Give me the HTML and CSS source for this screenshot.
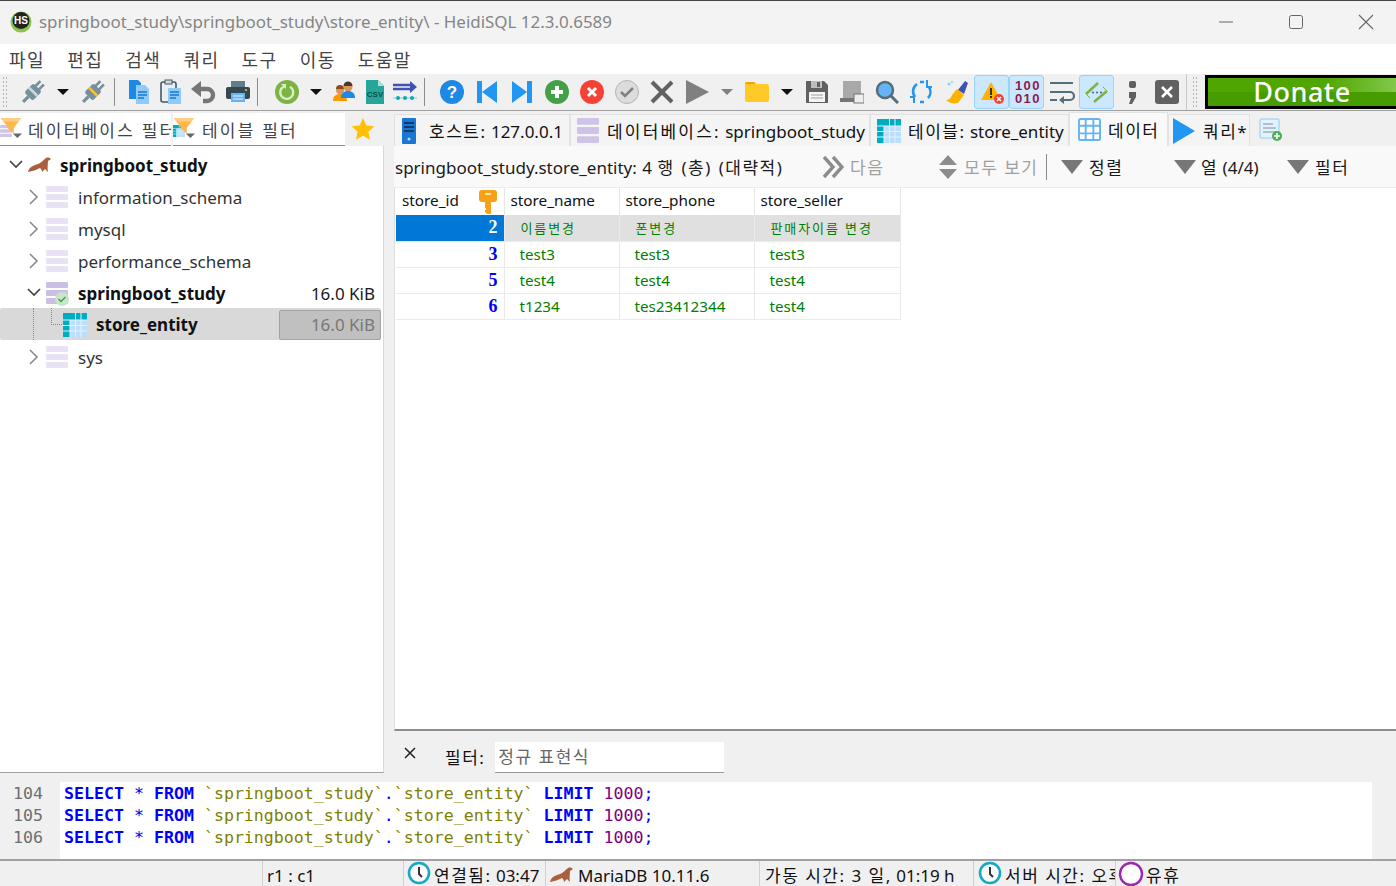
FILE: index.html
```html
<!DOCTYPE html>
<html lang="ko">
<head>
    <meta charset="UTF-8">
    <title>HeidiSQL</title>
    <link rel="stylesheet" href="styles.css">
</head>
<body>
    <svg class="defs" width="0" height="0">
        <symbol id="db" viewBox="0 0 22 22"><rect x="0" y="0" width="22" height="6" rx="1" fill="currentColor"/><rect x="0" y="8" width="22" height="6" rx="1" fill="currentColor"/><rect x="0" y="16" width="22" height="6" rx="1" fill="currentColor"/></symbol>
        <symbol id="chev-r" viewBox="0 0 12 16"><path d="M2 1l7 7-7 7" fill="none" stroke="#8a8a8a" stroke-width="1.6"/></symbol>
        <symbol id="chev-d" viewBox="0 0 16 12"><path d="M2 2l6 6 6-6" fill="none" stroke="#404040" stroke-width="1.6"/></symbol>
        <symbol id="seal" viewBox="0 0 26 18"><path d="M1 16c1-5 6-7 10-8 3-1 5-4 8-6 2-1 4 0 5 1l-3 2c0 3-1 7 0 11l-3-3-3 3c0-2-1-3-2-4-3 2-8 3-12 4z" fill="#a9603f"/></symbol>
        <symbol id="tri" viewBox="0 0 24 16"><path d="M1 1h22L12 15z" fill="#777"/></symbol>
        <symbol id="clock" viewBox="0 0 24 24"><circle cx="12" cy="12" r="10" fill="#fff" stroke="#17a9c4" stroke-width="2.6"/><path d="M12 6v7l3 3" fill="none" stroke="#333" stroke-width="2"/></symbol>
        <symbol id="grid" viewBox="0 0 24 24"><rect x="1" y="1" width="22" height="22" rx="2" fill="#fff" stroke="#64b5f6" stroke-width="2"/><path d="M8 1v22M16 1v22M1 8h22M1 16h22" stroke="#64b5f6" stroke-width="2"/></symbol>
        <symbol id="tealgrid" viewBox="0 0 24 24"><rect width="24" height="24" fill="#bbdefb"/><rect width="24" height="7" fill="#00acc1"/><rect width="7" height="24" fill="#00acc1"/><path d="M7 7v17M12.500 0v24M18 0v24M0 12.500h24M0 18h24M0 7h24" stroke="#e3f2fd" stroke-width="1"/></symbol>
        <symbol id="funnel" viewBox="0 0 24 24"><path d="M1 1h22l-8 11v6l-6-5v-1z" fill="#ffb74d"/><path d="M1 1h22l-3 4H4z" fill="#ffcc80"/><path d="M14 18h10l-5 5z" fill="#666"/></symbol>
    </svg>

    <header class="titlebar">
        <svg class="app-logo" width="22" height="22" viewBox="0 0 22 22"><circle cx="11" cy="11" r="10.500" fill="#8bc34a"/><circle cx="11" cy="9.500" r="8.500" fill="#222"/><text x="11" y="13" class="app-logo-text">HS</text></svg>
        <span class="title-text">springboot_study\springboot_study\store_entity\ - HeidiSQL 12.3.0.6589</span>
        <div class="win-controls">
            <svg width="16" height="16" viewBox="0 0 16 16"><path d="M1 8h14" stroke="#666" stroke-width="1"/></svg>
            <svg width="16" height="16" viewBox="0 0 16 16"><rect x="1.500" y="1.500" width="13" height="13" rx="2" fill="none" stroke="#666"/></svg>
            <svg width="16" height="16" viewBox="0 0 16 16"><path d="M1 1l14 14M15 1L1 15" stroke="#666" stroke-width="1.100"/></svg>
        </div>
    </header>

    <nav class="menubar">
        <span>파일</span><span>편집</span><span>검색</span><span>쿼리</span><span>도구</span><span>이동</span><span>도움말</span>
    </nav>

    <div class="toolbar-row">
        <div class="toolbar">
            <span class="grip"></span>
            <button class="tb"><svg width="28" height="28" viewBox="0 0 26 26"><g transform="rotate(45 13 13)"><rect x="9.500" y="1" width="2.500" height="7" fill="#78909c"/><rect x="14" y="1" width="2.500" height="7" fill="#78909c"/><rect x="7.500" y="7" width="11" height="12" rx="2" fill="#78909c"/><rect x="7.500" y="11.500" width="11" height="2.500" fill="#cfd8dc"/><rect x="11.500" y="19" width="3" height="7" fill="#78909c"/></g></svg></button>
            <button class="tb-drop"><span class="caret"></span></button>
            <button class="tb"><svg width="28" height="28" viewBox="0 0 26 26"><g transform="rotate(45 13 13)"><rect x="9.500" y="1" width="2.500" height="7" fill="#78909c"/><rect x="14" y="1" width="2.500" height="7" fill="#78909c"/><rect x="7.500" y="7" width="11" height="12" rx="2" fill="#78909c"/><rect x="7.500" y="11.500" width="11" height="2.500" fill="#fbc02d"/><rect x="11.500" y="19" width="3" height="7" fill="#78909c"/></g></svg></button>
            <span class="tb-sep"></span>
            <button class="tb w32"><svg width="24" height="26" viewBox="0 0 24 26"><path d="M2 1h9l3 3v16H2z" fill="#1e88e5"/><path d="M9 6h9l4 4v15H9z" fill="#90caf9"/><path d="M11 13h9M11 16h9M11 19h6" stroke="#1976d2" stroke-width="1.300"/></svg></button>
            <button class="tb w31"><svg width="24" height="26" viewBox="0 0 24 26"><rect x="2" y="3" width="15" height="20" rx="2" fill="#eceff1" stroke="#455a64" stroke-width="1.600"/><rect x="6" y="1" width="7" height="4" fill="#cfd8dc" stroke="#455a64"/><rect x="9" y="9" width="13" height="16" fill="#90caf9"/><path d="M11 13h9M11 16h9M11 19h6" stroke="#1976d2" stroke-width="1.300"/></svg></button>
            <button class="tb w34"><svg width="26" height="24" viewBox="0 0 26 24"><path d="M9 9h8a5.500 5.500 0 0 1 0 12h-4" fill="none" stroke="#757575" stroke-width="4.400"/><path d="M11 1L1 9l10 8z" fill="#757575"/></svg></button>
            <button class="tb"><svg width="26" height="24" viewBox="0 0 26 24"><rect x="6" y="1" width="14" height="6" fill="#607d8b"/><rect x="1" y="7" width="24" height="12" rx="2" fill="#37474f"/><rect x="6" y="13" width="14" height="9" fill="#64b5f6"/><path d="M8 16h10M8 19h10" stroke="#e3f2fd"/><rect x="20" y="9" width="2" height="2" fill="#8bc34a"/></svg></button>
            <span class="tb-sep sep-wide"></span>
            <button class="tb"><svg width="24" height="24" viewBox="0 0 24 24"><circle cx="12" cy="12" r="12" fill="#7cb342"/><path d="M9 6.500a6.500 6.500 0 1 0 6 .300" fill="none" stroke="#dcedc8" stroke-width="2.400"/><path d="M6 4h5v5z" fill="#dcedc8"/></svg></button>
            <button class="tb-drop w24"><span class="caret"></span></button>
            <button class="tb w32"><svg width="24" height="22" viewBox="0 0 24 22"><circle cx="8" cy="9" r="4" fill="#d9955b"/><path d="M4 8a4 4 0 0 1 8 0z" fill="#8d4a1b"/><path d="M1 20c0-5 3-7 7-7s7 2 7 7z" fill="#ff9800"/><circle cx="16" cy="6" r="4.500" fill="#d9955b"/><path d="M11.500 5a4.500 4.500 0 0 1 9 0z" fill="#4e342e"/><path d="M9 17c0-5 3-7 7-7s7 2 7 7z" fill="#1e88e5"/></svg></button>
            <button class="tb w30"><svg width="20" height="24" viewBox="0 0 20 24"><path d="M1 0h12l6 6v18H1z" fill="#26a69a"/><path d="M13 0l6 6h-6z" fill="#b2dfdb"/><text x="10" y="17" class="csv-text">CSV</text></svg></button>
            <button class="tb w30"><svg width="26" height="26" viewBox="0 0 26 26"><path d="M1 6h18M1 10h18" stroke="#3f51b5" stroke-width="2.500"/><path d="M18 2l7 6-7 6z" fill="#3f51b5"/><path d="M1 19h24" stroke="#b0bec5"/><circle cx="6" cy="19" r="2" fill="#00acc1"/><circle cx="13" cy="19" r="2" fill="#00acc1"/><circle cx="20" cy="19" r="2" fill="#00acc1"/></svg></button>
            <span class="tb-sep sep-wide2"></span>
            <button class="tb"><svg width="24" height="24" viewBox="0 0 24 24"><circle cx="12" cy="12" r="12" fill="#1e88e5"/><text x="12" y="18" class="help-text">?</text></svg></button>
            <button class="tb"><svg width="22" height="22" viewBox="0 0 22 22"><rect x="1" y="0" width="5" height="22" fill="#2196f3"/><path d="M21 0v22L6 11z" fill="#2196f3"/></svg></button>
            <button class="tb"><svg width="22" height="22" viewBox="0 0 22 22"><rect x="16" y="0" width="5" height="22" fill="#2196f3"/><path d="M1 0v22l15-11z" fill="#2196f3"/></svg></button>
            <button class="tb"><svg width="24" height="24" viewBox="0 0 24 24"><circle cx="12" cy="12" r="12" fill="#43a047"/><path d="M12 6v12M6 12h12" stroke="#fff" stroke-width="4"/></svg></button>
            <button class="tb"><svg width="24" height="24" viewBox="0 0 24 24"><circle cx="12" cy="12" r="12" fill="#f44336"/><path d="M8 8l8 8M16 8l-8 8" stroke="#fff" stroke-width="3"/></svg></button>
            <button class="tb"><svg width="24" height="24" viewBox="0 0 24 24"><circle cx="12" cy="12" r="11.500" fill="#dcdcdc" stroke="#b5b5b5"/><path d="M6 12l4 4 8-8" fill="none" stroke="#808080" stroke-width="2.500"/></svg></button>
            <button class="tb"><svg width="24" height="24" viewBox="0 0 24 24"><path d="M2 2l20 20M22 2L2 22" stroke="#616161" stroke-width="4"/></svg></button>
            <button class="tb"><svg width="24" height="24" viewBox="0 0 24 24"><path d="M1 0l23 12L1 24z" fill="#808080"/></svg></button>
            <button class="tb-drop"><span class="caret caret-gray"></span></button>
            <button class="tb"><svg width="24" height="20" viewBox="0 0 24 20"><path d="M0 2a2 2 0 0 1 2-2h7l2 2h11a2 2 0 0 1 2 2v14a2 2 0 0 1-2 2H2a2 2 0 0 1-2-2z" fill="#ffca28"/><path d="M0 2a2 2 0 0 1 2-2h7l2 2H0z" fill="#ffa000"/></svg></button>
            <button class="tb-drop"><span class="caret"></span></button>
            <button class="tb"><svg width="24" height="24" viewBox="0 0 24 24"><path d="M1 1h18l4 4v18H1z" fill="#616161"/><rect x="6" y="1" width="11" height="7" fill="#bdbdbd"/><rect x="12" y="2" width="3" height="5" fill="#616161"/><rect x="4" y="12" width="16" height="10" fill="#f5f5f5"/><path d="M6 15h12M6 18h12" stroke="#9e9e9e"/></svg></button>
            <button class="tb"><svg width="24" height="24" viewBox="0 0 24 24"><rect x="3" y="1" width="18" height="17" fill="#a9a9a9"/><path d="M0 18h16v4H0z" fill="#757575"/><rect x="14" y="14" width="10" height="9" fill="#eee" stroke="#757575"/></svg></button>
            <button class="tb"><svg width="24" height="24" viewBox="0 0 24 24"><circle cx="10" cy="10" r="8" fill="#64b5f6" stroke="#546e7a" stroke-width="2.500"/><path d="M16 16l7 7" stroke="#546e7a" stroke-width="3"/></svg></button>
            <button class="tb"><svg width="24" height="24" viewBox="0 0 24 24"><path d="M5 17a9 9 0 0 1 2-13M10 2h4M19 7a9 9 0 0 1-1 11M10 22h4" fill="none" stroke="#2196f3" stroke-width="2.600"/><path d="M17 0v7h5M4 23v-6h-4" fill="none" stroke="#2196f3" stroke-width="2"/></svg></button>
            <button class="tb"><svg width="24" height="24" viewBox="0 0 24 24"><path d="M13 10L20 1l3 2-4 11z" fill="#3f51b5"/><path d="M12 9l7 6-6 8c-4 1-9 0-12-3 3 0 5-2 6-5z" fill="#ffb300"/><circle cx="4" cy="4" r="1.500" fill="#81d4fa"/><circle cx="7" cy="2" r="1" fill="#81d4fa"/></svg></button>
            <button class="tb on"><svg width="24" height="24" viewBox="0 0 24 24"><path d="M11 2L1 20h20z" fill="#ffb300"/><rect x="10" y="8" width="2" height="7" fill="#333"/><rect x="10" y="16" width="2" height="2" fill="#333"/><circle cx="19" cy="19" r="5" fill="#f44336"/><path d="M17 17l4 4M21 17l-4 4" stroke="#fff" stroke-width="1.500"/></svg></button>
            <button class="tb on"><span class="bits">100<br>010</span></button>
            <button class="tb"><svg width="26" height="24" viewBox="0 0 26 24"><path d="M1 3h23M1 12h20a3.500 3.500 0 0 1 0 8h-7M1 20h7" fill="none" stroke="#546e7a" stroke-width="2.200"/><path d="M15 16v8l-5-4z" fill="#546e7a"/></svg></button>
            <button class="tb on"><svg width="26" height="24" viewBox="0 0 26 24"><path d="M2 14L14 3M10 22L23 11" stroke="#7cb342" stroke-width="2.600"/><path d="M2 14l4 4M23 11l-4-4" stroke="#7cb342" stroke-width="1"/><circle cx="9" cy="12.500" r="1.100" fill="#546e7a"/><circle cx="13" cy="12.500" r="1.100" fill="#546e7a"/><circle cx="17" cy="12.500" r="1.100" fill="#546e7a"/></svg></button>
            <button class="tb"><svg width="10" height="24" viewBox="0 0 10 24"><rect x="2" y="1" width="7" height="7" rx="2" fill="#616161"/><path d="M2 12h7v5l-4 7H2l2-6H2z" fill="#616161"/></svg></button>
            <button class="tb"><svg width="24" height="24" viewBox="0 0 24 24"><rect width="24" height="24" rx="3" fill="#616161"/><path d="M7 7l10 10M17 7L7 17" stroke="#fff" stroke-width="2.600"/></svg></button>
        </div>
        <div class="donate-bar">
            <span class="grip"></span>
            <div class="donate">Donate</div>
        </div>
    </div>

    <div class="main">
        <aside class="left-pane">
            <div class="filter-row">
                <div class="filter-box first">
                    <svg class="filter-db" width="12" height="14"><use href="#db" color="#d1c4e9"/></svg>
                    <svg class="filter-icon" width="22" height="24"><use href="#funnel"/></svg>
                    <span class="ko">데이터베이스 필터</span>
                </div>
                <div class="filter-box second">
                    <svg class="filter-db" width="12" height="14"><use href="#tealgrid"/></svg>
                    <svg class="filter-icon" width="22" height="24"><use href="#funnel"/></svg>
                    <span class="ko">테이블 필터</span>
                </div>
                <svg class="star" width="24" height="24" viewBox="0 0 24 24"><path d="M12 1l3.400 7.400 8 .9-6 5.400 1.700 8L12 18.700 4.900 22.700l1.700-8-6-5.400 8-.9z" fill="#ffc107"/></svg>
            </div>
            <ul class="tree">
                <li class="tree-row root">
                    <svg class="chev" width="16" height="12"><use href="#chev-d"/></svg>
                    <svg class="seal" width="26" height="18"><use href="#seal"/></svg>
                    <b>springboot_study</b>
                </li>
                <li class="tree-row db">
                    <svg class="chev" width="12" height="16"><use href="#chev-r"/></svg>
                    <svg class="db-icon" width="22" height="22"><use href="#db" color="#e8e2f4"/></svg>
                    <span>information_schema</span>
                </li>
                <li class="tree-row db">
                    <svg class="chev" width="12" height="16"><use href="#chev-r"/></svg>
                    <svg class="db-icon" width="22" height="22"><use href="#db" color="#e8e2f4"/></svg>
                    <span>mysql</span>
                </li>
                <li class="tree-row db">
                    <svg class="chev" width="12" height="16"><use href="#chev-r"/></svg>
                    <svg class="db-icon" width="22" height="22"><use href="#db" color="#e8e2f4"/></svg>
                    <span>performance_schema</span>
                </li>
                <li class="tree-row db">
                    <svg class="chev-open" width="16" height="12"><use href="#chev-d"/></svg>
                    <span class="db-active">
                        <svg class="db-icon" width="22" height="22"><use href="#db" color="#cbbfe6"/></svg>
                        <svg class="db-check" width="14" height="14" viewBox="0 0 14 14"><circle cx="7" cy="7" r="7" fill="#c8e6c9"/><path d="M3.500 7l2.500 2.500 4.500-4.500" fill="none" stroke="#43a047" stroke-width="1.400"/></svg>
                    </span>
                    <b>springboot_study</b>
                    <span class="size">16.0 KiB</span>
                </li>
                <li class="tree-row table selected">
                    <span class="guide"></span>
                    <svg class="table-icon" width="24" height="24"><use href="#tealgrid"/></svg>
                    <b>store_entity</b>
                    <span class="size-box">16.0 KiB</span>
                </li>
                <li class="tree-row db">
                    <svg class="chev" width="12" height="16"><use href="#chev-r"/></svg>
                    <svg class="db-icon" width="22" height="22"><use href="#db" color="#e8e2f4"/></svg>
                    <span>sys</span>
                </li>
            </ul>
        </aside>

        <section class="right-pane">
            <div class="tabs">
                <div class="tab tab-host">
                    <svg width="14" height="26" viewBox="0 0 14 26"><rect width="14" height="26" rx="1" fill="#1976d2"/><path d="M2 5h10M2 9h10M2 13h10" stroke="#0d2a4a" stroke-width="1.500"/><circle cx="7" cy="21" r="1.500" fill="#bbdefb"/></svg>
                    <span><span class="ko">호스트:</span> 127.0.0.1</span>
                </div>
                <div class="tab tab-db">
                    <svg width="22" height="25" viewBox="0 0 22 22" preserveAspectRatio="none"><use href="#db" color="#cfc3e8"/></svg>
                    <span><span class="ko">데이터베이스:</span> springboot_study</span>
                </div>
                <div class="tab tab-table">
                    <svg width="24" height="24"><use href="#tealgrid"/></svg>
                    <span><span class="ko">테이블:</span> store_entity</span>
                </div>
                <div class="tab tab-data active">
                    <svg width="23" height="23"><use href="#grid"/></svg>
                    <span class="ko">데이터</span>
                </div>
                <div class="tab tab-query">
                    <svg width="22" height="26" viewBox="0 0 22 26"><path d="M0 0l22 13L0 26z" fill="#2196f3"/></svg>
                    <span><span class="ko">쿼리</span>*</span>
                </div>
                <div class="tab-add">
                    <svg width="24" height="24" viewBox="0 0 24 24"><rect x="1" y="1" width="19" height="19" rx="1" fill="#e3f2fd" stroke="#90caf9"/><path d="M4 6h10M4 10h13M4 14h13" stroke="#78909c"/><circle cx="18" cy="18" r="5" fill="#4caf50"/><path d="M18 15v6M15 18h6" stroke="#fff" stroke-width="1.600"/></svg>
                </div>
            </div>

            <div class="data-head">
                <span class="data-title">springboot_study.store_entity: 4 <span class="ko">행 (총) (대략적)</span></span>
                <span class="head-item next">
                    <svg width="22" height="24" viewBox="0 0 22 24"><path d="M2 2l9 10-9 10M11 2l9 10-9 10" fill="none" stroke="#8c8c8c" stroke-width="3.400"/></svg>
                    <span class="muted ko">다음</span>
                </span>
                <span class="head-item showall">
                    <svg width="20" height="24" viewBox="0 0 20 24"><path d="M10 0l9 10H1zM10 24l9-10H1z" fill="#8c8c8c"/></svg>
                    <span class="muted ko">모두 보기</span>
                </span>
                <span class="head-item sort">
                    <svg width="24" height="16"><use href="#tri"/></svg>
                    <span class="ko">정렬</span>
                </span>
                <span class="head-item cols">
                    <svg width="24" height="16"><use href="#tri"/></svg>
                    <span><span class="ko">열</span> (4/4)</span>
                </span>
                <span class="head-item filt">
                    <svg width="24" height="16"><use href="#tri"/></svg>
                    <span class="ko">필터</span>
                </span>
            </div>

            <div class="grid-area">
                <table class="data-grid">
                    <colgroup><col class="c1"><col class="c2"><col class="c3"><col class="c4"></colgroup>
                    <thead>
                        <tr>
                            <th class="th-first"><span class="th-id">store_id<svg width="18" height="24" viewBox="0 0 18 24"><path d="M3 0h12a3 3 0 0 1 3 3v6a3 3 0 0 1-3 3h-3v12H8l-2-2v-2h1v-2H6v-6H3a3 3 0 0 1-3-3V3a3 3 0 0 1 3-3z" fill="#f6a118"/><rect x="6" y="3" width="6" height="2" fill="#ffe0a3"/></svg></span></th>
                            <th>store_name</th>
                            <th>store_phone</th>
                            <th>store_seller</th>
                        </tr>
                    </thead>
                    <tbody>
                        <tr class="sel">
                            <td class="id focus">2</td>
                            <td class="small">이름변경</td>
                            <td class="small">폰변경</td>
                            <td class="small">판매자이름 변경</td>
                        </tr>
                        <tr><td class="id">3</td><td>test3</td><td>test3</td><td>test3</td></tr>
                        <tr><td class="id">5</td><td>test4</td><td>test4</td><td>test4</td></tr>
                        <tr><td class="id">6</td><td>t1234</td><td>tes23412344</td><td>test4</td></tr>
                    </tbody>
                </table>
            </div>

            <div class="filter-panel">
                <svg class="filter-x" width="12" height="12" viewBox="0 0 12 12"><path d="M1 1l10 10M11 1L1 11" stroke="#222" stroke-width="1.500"/></svg>
                <span class="filter-label ko">필터:</span>
                <span class="filter-input ko">정규 표현식</span>
            </div>
        </section>
    </div>

    <div class="log">
        <div class="gutter">
            <div class="log-line">104</div>
            <div class="log-line">105</div>
            <div class="log-line">106</div>
        </div>
        <div class="sql">
            <div class="log-line"><span class="kw">SELECT</span> * <span class="kw">FROM</span> <span class="name">&#96;springboot_study&#96;</span>.<span class="name">&#96;store_entity&#96;</span> <span class="kw">LIMIT</span> <span class="num">1000</span>;</div>
            <div class="log-line"><span class="kw">SELECT</span> * <span class="kw">FROM</span> <span class="name">&#96;springboot_study&#96;</span>.<span class="name">&#96;store_entity&#96;</span> <span class="kw">LIMIT</span> <span class="num">1000</span>;</div>
            <div class="log-line"><span class="kw">SELECT</span> * <span class="kw">FROM</span> <span class="name">&#96;springboot_study&#96;</span>.<span class="name">&#96;store_entity&#96;</span> <span class="kw">LIMIT</span> <span class="num">1000</span>;</div>
        </div>
        <div class="log-scroll"></div>
    </div>

    <footer class="statusbar">
        <div class="st st-blank"></div>
        <div class="st st-pos">r1 : c1</div>
        <div class="st st-conn"><svg width="24" height="24"><use href="#clock"/></svg><span><span class="ko">연결됨:</span> 03:47</span></div>
        <div class="st st-ver"><svg width="26" height="18"><use href="#seal"/></svg><span>MariaDB 10.11.6</span></div>
        <div class="st st-up"><span><span class="ko">가동 시간: 3 일,</span> 01:19 h</span></div>
        <div class="st st-time"><svg width="24" height="24"><use href="#clock"/></svg><span class="ko">서버 시간: 오후</span></div>
        <div class="st st-idle"><svg width="26" height="26" viewBox="0 0 26 26"><circle cx="13" cy="13" r="11" fill="#fff" stroke="#9c27b0" stroke-width="2.400"/></svg><span class="ko">유휴</span></div>
    </footer>
</body>
</html>
```

FILE: styles.css
```css
* {
    box-sizing: border-box;
}

html, body {
    margin: 0;
    height: 100%;
}

body {
    width: 1396px;
    height: 886px;
    overflow: hidden;
    display: flex;
    flex-direction: column;
    font-family: "Noto Sans", "Noto Sans CJK KR", sans-serif;
    font-size: 17px;
    color: #1a1a1a;
    background: #f0f0f0;
}

.defs {
    position: absolute;
}

button {
    font: inherit;
    border: 0;
    padding: 0;
    background: none;
}

svg {
    display: block;
    flex: none;
}

/* hangul runs wider in the original font */
.ko {
    letter-spacing: 1.500px;
}

/* title bar */
.titlebar {
    height: 44px;
    flex: none;
    display: flex;
    align-items: center;
    padding: 0 0 2px 10px;
    background: #f3f3f3;
    border-top: 1px solid #444;
}

.app-logo {
    margin-right: 7px;
}

.app-logo-text {
    font-family: "Liberation Sans", sans-serif;
    font-size: 10px;
    font-weight: bold;
    fill: #fff;
    text-anchor: middle;
}

.csv-text {
    font-family: "Liberation Sans", sans-serif;
    font-size: 8px;
    font-weight: bold;
    fill: #134e4a;
    text-anchor: middle;
}

.help-text {
    font-family: "Liberation Sans", sans-serif;
    font-size: 17px;
    font-weight: bold;
    fill: #fff;
    text-anchor: middle;
}

.title-text {
    font-size: 16.950px;
    color: #858585;
    white-space: nowrap;
}

.win-controls {
    margin-left: auto;
    display: flex;
    gap: 54px;
    padding-right: 22px;
}

/* menu */
.menubar {
    height: 30px;
    flex: none;
    display: flex;
    align-items: center;
    gap: 22px;
    padding-left: 9px;
    background: #fff;
    font-size: 18px;
    letter-spacing: 1.500px;
    color: #444;
}

/* toolbar */
.toolbar-row {
    height: 37px;
    flex: none;
    display: flex;
    border-bottom: 1px solid #a0a0a0;
    background: #f0f0f0;
}

.toolbar {
    width: 1187px;
    display: flex;
    align-items: center;
    padding-left: 2px;
    border-right: 1px solid #c8c8c8;
}

.grip {
    width: 6px;
    height: 32px;
    flex: none;
    background-image: radial-gradient(circle, #b5b5b5 1px, transparent 1px);
    background-size: 3px 4px;
}

.toolbar > .grip {
    margin-right: 7px;
}

.tb {
    width: 35px;
    height: 34px;
    flex: none;
    display: flex;
    align-items: center;
    justify-content: center;
}

.tb.w34 { width: 34px; }
.tb.w32 { width: 32px; }
.tb.w31 { width: 31px; }
.tb.w30 { width: 30px; }

.tb.on {
    background: #cce8ff;
    border: 1px solid #99d1ff;
    border-radius: 3px;
}

.tb-drop {
    width: 25px;
    height: 34px;
    flex: none;
    display: flex;
    align-items: center;
    justify-content: center;
}

.tb-drop.w24 {
    width: 24px;
}

.caret {
    width: 0;
    height: 0;
    border-left: 6px solid transparent;
    border-right: 6px solid transparent;
    border-top: 6px solid #111;
}

.caret-gray {
    border-top-color: #808080;
}

.tb-sep {
    width: 1px;
    height: 28px;
    flex: none;
    margin: 0 8px 0 4px;
    background: #8c8c8c;
}

.sep-wide {
    margin: 0 11px 0 2px;
}

.sep-wide2 {
    margin: 0 9px 0 4px;
}

.bits {
    padding-left: 3px;
    font-family: "Liberation Sans", sans-serif;
    font-size: 13px;
    font-weight: bold;
    line-height: 13px;
    letter-spacing: 1.500px;
    color: #8e1b4f;
    text-align: center;
}

.donate-bar {
    flex: 1;
    display: flex;
    align-items: center;
    padding-left: 5px;
}

.donate-bar .grip {
    margin-right: 7px;
}

.donate {
    flex: 1;
    height: 34px;
    border: 3px solid #000;
    border-right: 0;
    background: linear-gradient(90deg, #4fa600 0, #4fa600 62%, #82c84a 100%) top / 100% 50% no-repeat, #469c00;
    color: #fff;
    font-size: 27px;
    font-weight: 500;
    line-height: 27px;
    letter-spacing: .5px;
    text-align: center;
}

/* main area */
.main {
    height: 662px;
    flex: none;
    display: flex;
}

.left-pane {
    width: 384px;
    flex: none;
    display: flex;
    flex-direction: column;
}

.filter-row {
    height: 35px;
    flex: none;
    padding-top: 2px;
    display: flex;
}

.filter-box {
    position: relative;
    height: 33px;
    display: flex;
    align-items: center;
    background: #fff;
    border-bottom: 1px solid #8c8c8c;
    overflow: hidden;
    white-space: nowrap;
    color: #444;
}

.filter-box .ko {
    letter-spacing: 2.200px;
}

.filter-box.first {
    width: 171px;
    margin-right: 2px;
    padding-left: 28px;
}

.filter-box.second {
    width: 172px;
    padding-left: 29px;
}

.filter-icon {
    position: absolute;
    left: 0;
    top: 3px;
}

.filter-db {
    position: absolute;
    left: 0;
    top: 11px;
}

.star {
    margin: 4px 0 0 6px;
}

.tree {
    flex: 1;
    margin: 0;
    padding: 3px 0 0;
    list-style: none;
    background: #fff;
    border-right: 1px solid #d8d8d8;
    border-bottom: 1px solid #a0a0a0;
}

.tree-row {
    height: 32px;
    display: flex;
    align-items: center;
    position: relative;
    white-space: nowrap;
}

.tree-row.root {
    padding-left: 8px;
}

.tree-row.root .seal {
    margin: 0 7px 0 3px;
}

.tree-row.db {
    padding-left: 28px;
}

.tree-row.db > .chev {
    width: 12px;
    margin-right: 6px;
}

.chev-open {
    margin-left: -2px;
    margin-right: 4px;
}

.db-icon {
    margin-right: 10px;
}

.db-active {
    position: relative;
    display: block;
}

.db-check {
    position: absolute;
    left: 9px;
    top: 10px;
}

.tree-row b {
    font-weight: 700;
    color: #111;
}

.tree-row.db span:not(.db-active):not(.size) {
    color: #333;
}

.size {
    margin-left: auto;
    padding-right: 8px;
}

.tree-row.selected {
    background: #d9d9d9;
    border-radius: 2px;
    margin: -1px 2px 1px 0;
    padding-left: 63px;
    padding-top: 1px;
}

.guide {
    position: absolute;
    left: 33px;
    top: 0;
    bottom: 0;
    width: 18px;
    border-left: 1px dotted #888;
}

.guide::after {
    content: "";
    position: absolute;
    left: 17px;
    top: 0;
    height: 16px;
    width: 12px;
    border-left: 1px dotted #888;
    border-bottom: 1px dotted #888;
}

.table-icon {
    margin-right: 9px;
}

.size-box {
    margin-left: auto;
    width: 102px;
    height: 30px;
    line-height: 28px;
    text-align: right;
    padding-right: 5px;
    background: #c0c0c0;
    border: 1px solid #a3a3a3;
    border-radius: 2px;
    color: #777;
}

/* right side */
.right-pane {
    flex: 1;
    padding-left: 10px;
    display: flex;
    flex-direction: column;
}

.tabs {
    height: 35px;
    flex: none;
    padding-top: 2px;
    display: flex;
    align-items: flex-end;
    white-space: nowrap;
}

.tab {
    height: 32px;
    display: flex;
    align-items: center;
    gap: 10px;
    padding-left: 7px;
    background: #f4f4f4;
    border: 1px solid #e2e2e2;
    border-bottom: 0;
    color: #111;
    overflow: hidden;
}

.tab-host { width: 176px; gap: 13px; }
.tab-db { width: 300px; padding-left: 6px; gap: 8px; }
.tab-db .ko { letter-spacing: 2.200px; }
.tab-table { width: 199px; padding-left: 6px; gap: 7px; }

.tab-data {
    width: 99px;
    height: 34px;
    background: #f9f9f9;
    padding-left: 8px;
    gap: 7px;
}

.tab-query {
    width: 82px;
    padding-left: 4px;
    gap: 8px;
}

.tab-add {
    height: 32px;
    margin-left: 9px;
    display: flex;
    align-items: center;
}

.data-head {
    height: 41px;
    flex: none;
    display: flex;
    align-items: center;
    background: #f9f9f9;
    white-space: nowrap;
}

.data-title {
    width: 428px;
    flex: none;
    padding-left: 1px;
    word-spacing: 1px;
}

.head-item {
    display: flex;
    align-items: center;
    flex: none;
}

.muted {
    color: #a0a0a0;
}

.next {
    width: 116px;
    gap: 6px;
}

.showall {
    width: 109px;
    height: 26px;
    gap: 6px;
    border-right: 1px solid #8c8c8c;
}

.sort {
    width: 126px;
    padding-left: 13px;
    gap: 5px;
}

.cols {
    width: 113px;
    gap: 4px;
}

.filt {
    gap: 5px;
}

.grid-area {
    flex: 1;
    background: #fff;
    border-top: 1px solid #ececec;
    border-left: 1px solid #e0e0e0;
    border-bottom: 2px solid #8c8c8c;
    overflow: hidden;
}

.data-grid {
    border-collapse: collapse;
    table-layout: fixed;
    width: 504px;
    margin-left: 1px;
    font-size: 15.200px;
}

.c1 { width: 108px; }
.c2 { width: 115px; }
.c3 { width: 135px; }
.c4 { width: 146px; }

.data-grid th {
    height: 27px;
    padding: 0 0 4px 6px;
    font-size: 15.300px;
    font-weight: 400;
    text-align: left;
    color: #111;
    border-right: 1px solid #e6e6e6;
}

.data-grid .th-first {
    padding: 0 0 0 6px;
}

.th-id {
    display: flex;
    align-items: center;
    justify-content: space-between;
    padding-right: 7px;
    height: 26px;
    padding-bottom: 3px;
}

.th-id svg {
    margin-bottom: -3px;
}

.data-grid td {
    height: 26px;
    padding: 0 0 0 15px;
    color: #008000;
    border-right: 1px solid #eaeaea;
    border-bottom: 1px solid #eaeaea;
}

.data-grid td.id {
    padding: 0 6px 0 0;
    text-align: right;
    font-family: "Liberation Serif", serif;
    font-size: 18px;
    font-weight: bold;
    color: #0000ff;
}

.data-grid td.small {
    padding-left: 16px;
    font-size: 13px;
    letter-spacing: 1.900px;
}

.sel td {
    background: #e0e0e0;
}

.data-grid td.focus {
    background: #0078d7;
    color: #fff;
}

.filter-panel {
    height: 42px;
    flex: none;
    display: flex;
    align-items: center;
    background: #f0f0f0;
}

.filter-x {
    margin: 2px 0 0 10px;
}

.filter-label {
    margin: 8px 0 0 29px;
    color: #111;
}

.filter-input {
    width: 229px;
    height: 31px;
    margin: 10px 0 0 10px;
    padding-left: 3px;
    line-height: 30px;
    background: #fff;
    border-bottom: 1px solid #999;
    color: #666;
}

/* sql log */
.log {
    height: 77px;
    flex: none;
    margin-top: 9px;
    display: flex;
    background: #fff;
    font-family: "DejaVu Sans Mono", monospace;
    font-size: 16.600px;
}

.log-line {
    height: 22px;
    line-height: 22px;
    white-space: pre;
}

.gutter {
    width: 60px;
    flex: none;
    padding: 1px 0 0 13px;
    background: #f0f0f0;
    color: #6e6e6e;
}

.sql {
    flex: 1;
    padding: 1px 0 0 4px;
    color: #0000ff;
}

.kw {
    font-weight: bold;
}

.name {
    color: #808000;
}

.num {
    color: #800080;
}

.log-scroll {
    width: 24px;
    flex: none;
    background: #f0f0f0;
}

/* status bar */
.statusbar {
    height: 27px;
    flex: none;
    display: flex;
    border-top: 2px solid #a0a0a0;
    background: #f0f0f0;
    overflow: hidden;
    white-space: nowrap;
    color: #111;
}

.st {
    height: 25px;
    display: flex;
    align-items: flex-start;
    flex: none;
    overflow: hidden;
    border-left: 1px solid #d0d0d0;
    padding: 3px 0 0 4px;
    line-height: 24px;
}

.st-blank { width: 262px; border-left: 0; }
.st-pos { width: 141px; }
.st-conn { width: 142px; gap: 3px; padding-left: 3px; padding-top: 0; }
.st-conn > span, .st-time > span, .st-ver > span, .st-idle > span { padding-top: 3px; }
.st-ver { width: 214px; gap: 3px; padding-left: 3px; padding-top: 0; }
.st-ver svg { margin-top: 5px; }
.st-up { width: 214px; padding-left: 5px; }
.st-time { width: 142px; gap: 3px; padding-left: 4px; padding-top: 0; }
.st-idle { flex: 1; gap: 2px; padding-left: 2px; padding-top: 0; }
```
